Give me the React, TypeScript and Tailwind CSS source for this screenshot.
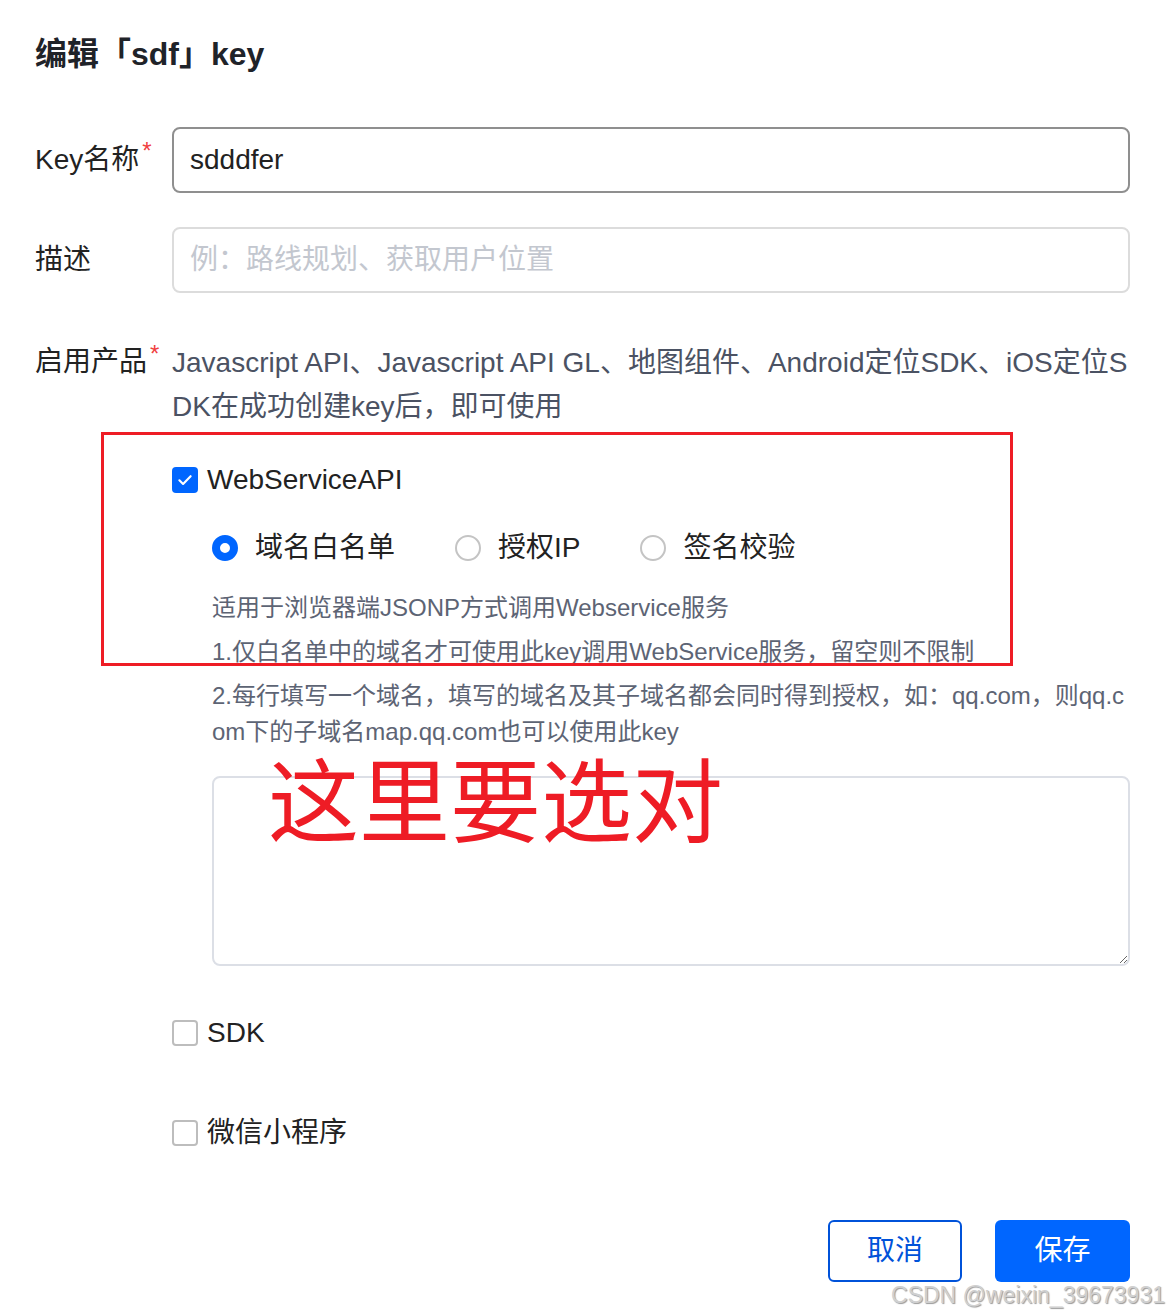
import React from 'react';

const font = { fontFamily: '"Liberation Sans", "Noto Sans CJK SC", sans-serif' };

function Check({ checked, label }: { checked?: boolean; label: string }) {
  return (
    <div className="flex items-center h-[40px]">
      {checked ? (
        <span className="w-[26px] h-[26px] rounded-[4px] bg-[#0066ff] flex items-center justify-center">
          <svg width="18" height="18" viewBox="0 0 16 16" fill="none">
            <path d="M3 8.3l3.3 3.2L13 4.6" stroke="#fff" strokeWidth="1.9" strokeLinecap="round" strokeLinejoin="round" />
          </svg>
        </span>
      ) : (
        <span className="w-[26px] h-[26px] rounded-[4px] border-2 border-[#bdbdbd] bg-white" />
      )}
      <span className="ml-[9px] text-[28px] text-[#222]">{label}</span>
    </div>
  );
}

function Radio({ checked, label }: { checked?: boolean; label: string }) {
  return (
    <div className="flex items-center">
      {checked ? (
        <span className="w-[26px] h-[26px] rounded-full border-[8px] border-[#0066ff] bg-white" />
      ) : (
        <span className="w-[26px] h-[26px] rounded-full border-2 border-[#c4c4c4] bg-white" />
      )}
      <span className="ml-[17px] text-[28px] text-[#222]">{label}</span>
    </div>
  );
}

function Label({ text, required }: { text: string; required?: boolean }) {
  return (
    <div className="w-[137px] shrink-0 text-[28px] text-[#222] relative">
      <span>{text}</span>
      {required && <span className="text-[#f04040] text-[24px] align-top leading-none ml-[3px]">*</span>}
    </div>
  );
}

export default function App() {
  return (
    <div className="w-[1170px] h-[1313px] bg-white relative overflow-hidden" style={font}>
      <div className="pl-[35px] pr-[40px] pt-[34px]">
        <h1 className="text-[32px] font-bold text-[#1f2329] leading-[40px]">编辑「sdf」key</h1>

        <div className="flex items-center mt-[53px]">
          <Label text="Key名称" required />
          <div className="flex-1 h-[66px] border-2 border-[#8f8f8f] rounded-[8px] flex items-center px-[16px] text-[28px] text-[#222]">
            sdddfer
          </div>
        </div>

        <div className="flex items-center mt-[34px]">
          <Label text="描述" />
          <div className="flex-1 h-[66px] border-2 border-[#dcdcdc] rounded-[8px] flex items-center px-[16px] text-[28px] text-[#c3c7cf]">
            例：路线规划、获取用户位置
          </div>
        </div>

        <div className="flex mt-[48px]">
          <div className="pt-[1px] leading-[40px]">
            <Label text="启用产品" required />
          </div>
          <div className="flex-1 min-w-0">
            <p className="text-[28px] leading-[44px] text-[#4b5263] break-all">
              Javascript API、Javascript API GL、地图组件、Android定位SDK、iOS定位SDK在成功创建key后，即可使用
            </p>

            <div className="mt-[31px]">
              <Check checked label="WebServiceAPI" />
            </div>

            <div className="pl-[40px]">
              <div className="flex items-center h-[40px] mt-[28px] gap-[60px]">
                <Radio checked label="域名白名单" />
                <Radio label="授权IP" />
                <Radio label="签名校验" />
              </div>

              <div className="mt-[22px] text-[24px] leading-[36px] text-[#5d6474] break-all">
                <p className="mb-[8px]">适用于浏览器端JSONP方式调用Webservice服务</p>
                <p className="mb-[8px]">1.仅白名单中的域名才可使用此key调用WebService服务，留空则不限制</p>
                <p>2.每行填写一个域名，填写的域名及其子域名都会同时得到授权，如：qq.com，则qq.com下的子域名map.qq.com也可以使用此key</p>
              </div>

              <textarea
                className="mt-[26px] block w-full h-[190px] border-2 border-[#dcdfe6] rounded-[8px] resize-y outline-none"
                defaultValue=""
              />
            </div>

            <div className="mt-[47px]">
              <Check label="SDK" />
            </div>
            <div className="mt-[60px]">
              <Check label="微信小程序" />
            </div>
          </div>
        </div>

        <div className="flex justify-end gap-[33px] mt-[67px]">
          <button className="w-[134px] h-[62px] border-2 border-[#0052d9] rounded-[6px] text-[28px] text-[#0052d9] bg-white">
            取消
          </button>
          <button className="w-[135px] h-[62px] rounded-[6px] text-[28px] text-white bg-[#0066ff]">
            保存
          </button>
        </div>
      </div>

      {/* annotation overlays */}
      <div className="absolute left-[101px] top-[432px] w-[912px] h-[234px] border-[3px] border-[#ee1c25] pointer-events-none" />
      <div className="absolute left-[268px] top-[759px] text-[91px] leading-[0.8] text-[#ee1c25] pointer-events-none" style={{ fontFamily: '"Noto Sans CJK SC", sans-serif' }}>
        这里要选对
      </div>
      <div
        className="absolute right-[5px] bottom-[6px] text-[23px] leading-none text-[#d0d0d0]"
        style={{ textShadow: '1px 1px 1px #9a9a9a' }}
      >
        CSDN @weixin_39673931
      </div>
    </div>
  );
}
